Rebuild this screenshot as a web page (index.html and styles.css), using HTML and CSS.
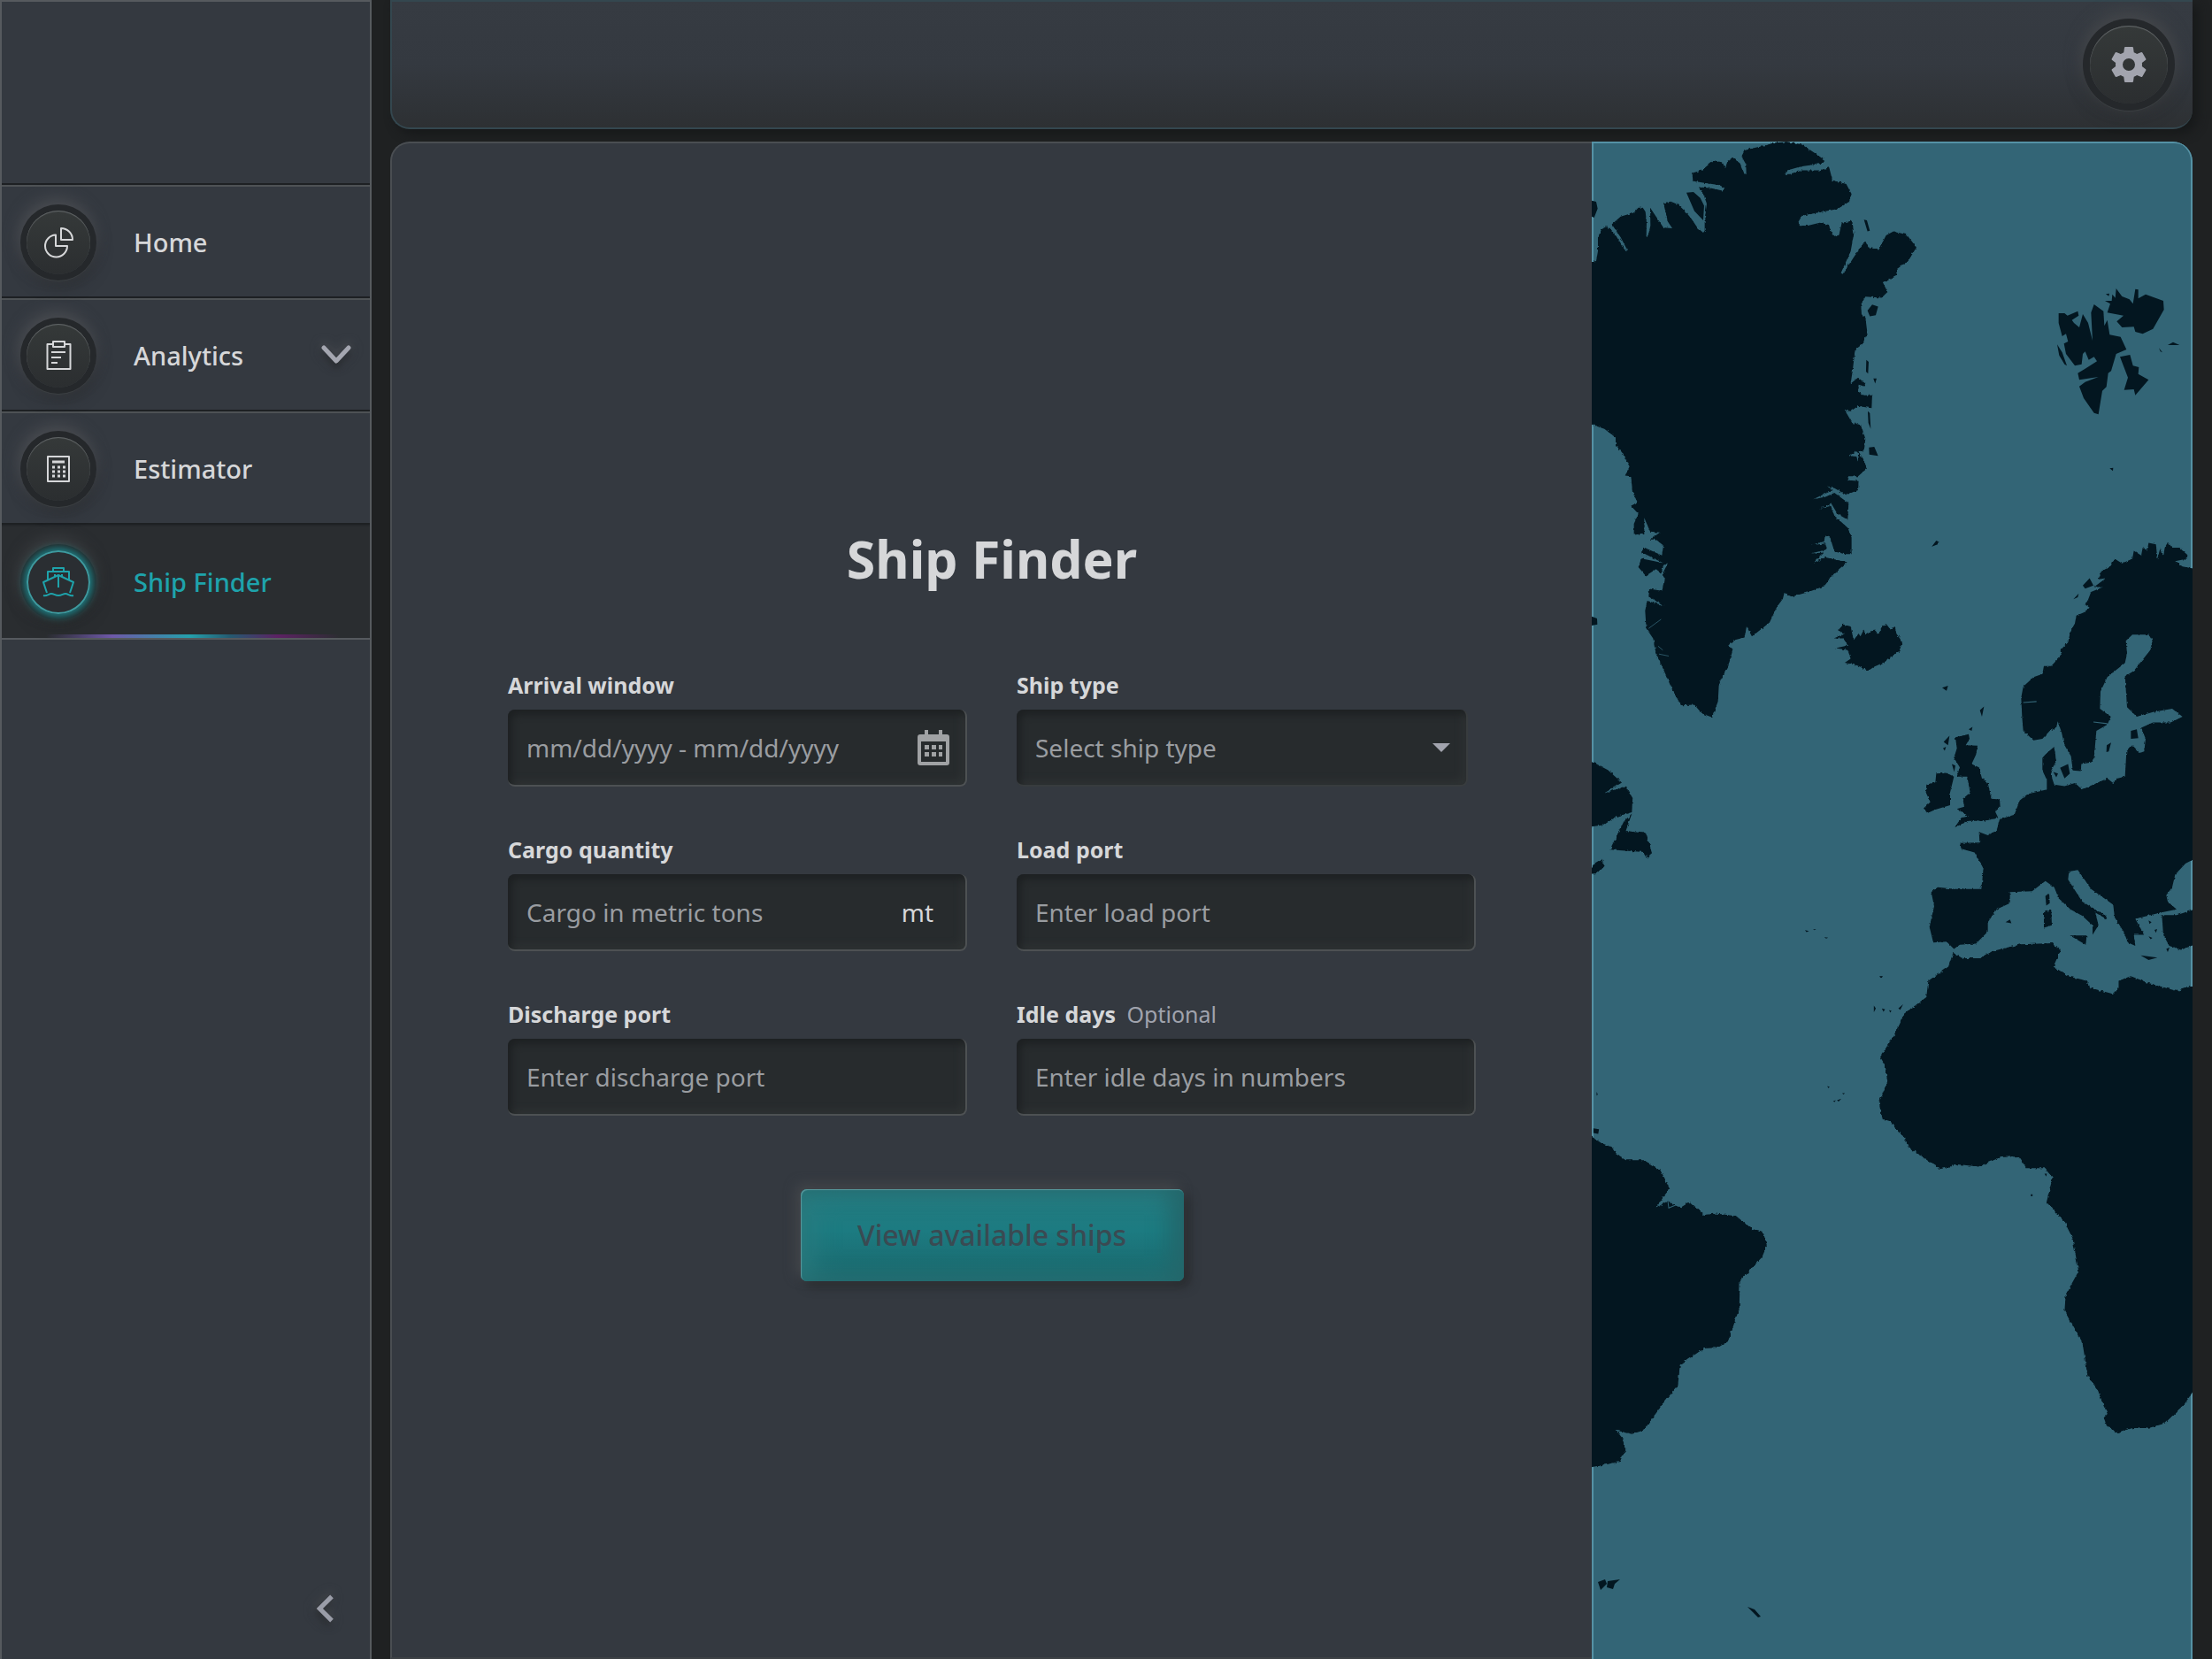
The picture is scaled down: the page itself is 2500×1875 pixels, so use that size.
FILE: index.html
```html
<!DOCTYPE html>
<html lang="en">
<head>
<meta charset="utf-8">
<meta name="viewport" content="width=device-width, initial-scale=1">
<title>Ship Finder</title>
<link rel="stylesheet" href="styles.css">
</head>
<body>
<div class="app">
  <aside class="sidebar">
    <nav class="nav" aria-label="Main">
      <a class="nav-item" href="#home">
        <span class="knob"><svg class="icon" viewBox="0 0 36 36" fill="none" stroke="currentColor" stroke-width="2" stroke-linejoin="round"><path d="M15 9.500A12.500 12.500 0 1 0 28 22H15z"/><path d="M21 2v13h13A13 13 0 0 0 21 2z"/></svg></span>
        <span>Home</span>
      </a>
      <a class="nav-item" href="#analytics">
        <span class="knob"><svg class="icon" viewBox="0 0 36 36" fill="none" stroke="currentColor" stroke-width="2" stroke-linejoin="round"><path d="M12 5H5.500v28h26V5H25"/><path d="M12 2h13v6H12z"/><path d="M10 14h16M10 20h11M10 26h7"/></svg></span>
        <span>Analytics</span>
        <svg class="expand" viewBox="0 0 40 26" fill="none" stroke="currentColor" stroke-width="5" stroke-linecap="round" stroke-linejoin="round"><path d="M6 4l14 15L34 4"/></svg>
      </a>
      <a class="nav-item" href="#estimator">
        <span class="knob"><svg class="icon" viewBox="0 0 36 36" fill="none" stroke="currentColor" stroke-width="2" stroke-linejoin="round"><path d="M6 4h24v28H6z"/><path d="M11 10h14" stroke-width="3"/><path d="M11 16h15M11 21h15M11 26h15" stroke-width="3" stroke-dasharray="3 3"/></svg></span>
        <span>Estimator</span>
      </a>
      <a class="nav-item nav-item-active" href="#ship-finder" aria-current="page">
        <span class="knob knob-active"><svg class="icon" viewBox="0 0 36 36" fill="none" stroke="currentColor" stroke-width="2" stroke-linejoin="round"><path d="M12 6V2h12v4M6 15V6h24v9"/><path d="M5 30L1 18l17-8 17 8-4 12"/><path d="M18 10v14M14 9v3M22 9v3"/><path d="M1 33c4 1 6-2 9-2s4 2 8 2 5-2 8-2 5 3 9 2"/></svg></span>
        <span>Ship Finder</span>
      </a>
    </nav>
    <button class="collapse" type="button" aria-label="Collapse menu"><svg viewBox="0 0 24 24" fill="currentColor"><path d="M15.410 7.410L14 6l-6 6 6 6 1.410-1.410L10.830 12z"/></svg></button>
  </aside>

  <div class="main">
    <header class="topbar">
      <button class="settings" type="button" aria-label="Settings"><svg viewBox="0 0 24 24" fill="currentColor"><path d="M19.430 12.980c.04-.32.07-.64.07-.98s-.03-.66-.07-.98l2.110-1.650c.19-.15.24-.42.12-.64l-2-3.460c-.12-.22-.39-.3-.61-.22l-2.490 1c-.52-.4-1.080-.73-1.690-.98l-.38-2.650C14.460 2.180 14.250 2 14 2h-4c-.25 0-.46.18-.49.42l-.38 2.650c-.61.25-1.170.59-1.690.98l-2.490-1c-.23-.09-.49 0-.61.22l-2 3.460c-.13.22-.07.49.12.64l2.110 1.650c-.04.32-.07.65-.07.98s.03.66.07.98l-2.110 1.650c-.19.15-.24.42-.12.64l2 3.460c.12.22.39.3.61.22l2.490-1c.52.4 1.080.73 1.690.98l.38 2.650c.03.24.24.42.49.42h4c.25 0 .46-.18.49-.42l.38-2.650c.61-.25 1.170-.59 1.690-.98l2.490 1c.23.09.49 0 .61-.22l2-3.460c.12-.22.07-.49-.12-.64zM12 15.500a3.500 3.500 0 1 1 0-7 3.500 3.500 0 0 1 0 7z"/></svg></button>
    </header>

    <main class="panel">
      <form class="finder">
        <h1 class="title">Ship Finder</h1>
        <div class="fields">
          <div class="field">
            <label class="label" for="arrival">Arrival window</label>
            <div class="box">
              <input class="control" id="arrival" type="text" placeholder="mm/dd/yyyy - mm/dd/yyyy">
              <button class="calendar" type="button" aria-label="Choose dates"><svg viewBox="0 0 36 40" fill="currentColor"><path fill-rule="evenodd" d="M3 5h5V0h4v5h12V0h4v5h5a3 3 0 0 1 3 3v29a3 3 0 0 1-3 3H3a3 3 0 0 1-3-3V8a3 3 0 0 1 3-3zm1 8v23h28V13z"/><path d="M8 17h5v5H8zM16 17h5v5h-5zM24 17h4v5h-4zM8 25h5v5H8zM16 25h5v5h-5zM24 25h4v5h-4z"/></svg></button>
            </div>
          </div>
          <div class="field">
            <label class="label" for="type">Ship type</label>
            <div class="box box-select">
              <select class="control" id="type"><option>Select ship type</option></select>
              <svg class="caret" viewBox="0 0 20 10" fill="currentColor"><path d="M0 0h20L10 10z"/></svg>
            </div>
          </div>
          <div class="field">
            <label class="label" for="cargo">Cargo quantity</label>
            <div class="box">
              <input class="control" id="cargo" type="text" placeholder="Cargo in metric tons">
              <span class="unit">mt</span>
            </div>
          </div>
          <div class="field">
            <label class="label" for="load">Load port</label>
            <div class="box"><input class="control" id="load" type="text" placeholder="Enter load port"></div>
          </div>
          <div class="field">
            <label class="label" for="discharge">Discharge port</label>
            <div class="box"><input class="control" id="discharge" type="text" placeholder="Enter discharge port"></div>
          </div>
          <div class="field">
            <label class="label" for="idle">Idle days <span class="optional">Optional</span></label>
            <div class="box"><input class="control" id="idle" type="text" placeholder="Enter idle days in numbers"></div>
          </div>
        </div>
        <button class="submit" type="submit">View available ships</button>
      </form>

      <div class="map">
        <svg class="map-art" viewBox="1799 160 679 1715" preserveAspectRatio="xMinYMin slice" role="img" aria-label="Map of the Atlantic Ocean">
          <defs><filter id="coast" x="0" y="0" width="1" height="1" color-interpolation-filters="sRGB"><feTurbulence type="fractalNoise" baseFrequency="0.12" numOctaves="2" seed="4"/><feDisplacementMap in="SourceGraphic" scale="8" xChannelSelector="R" yChannelSelector="G"/></filter></defs>
          <!-- Greenland, Iceland, Jan Mayen -->
          <g fill="#031620" transform="translate(1790 150) scale(.3333 .4464)">
            <path d="M20 328L42 325 48 300 48 265 60 245 75 238 92 245 110 262 130 285 143 298 147 296 125 265 95 232 125 212 170 202 185 190 200 190 209 200 213 225 212 265 218 262 226 235 225 190 245 212 270 240 300 242 285 225 270 178 295 174 320 182 345 200 365 218 385 240 405 253 410 248 410 220 417 180 408 160 390 138 430 140 470 147 478 140 460 133 400 126 370 122 368 102 400 95 440 70 470 75 480 90 490 70 505 63 530 78 545 105 551 103 550 80 535 60 545 45 570 40 600 35 650 25 690 23 740 30 780 50 818 70 810 78 740 85 690 95 680 105 700 105 740 95 800 95 832 88 843 120 890 130 908 155 900 175 860 193 810 200 740 210 728 225 732 236 760 235 800 228 830 233 845 262 865 260 875 228 910 223 916 255 905 300 872 355 878 358 920 310 955 275 965 290 1000 297 1025 260 1050 250 1095 258 1128 290 1100 325 1062 345 1062 362 1015 380 1030 403 1010 418 955 415 940 435 942 460 955 468 962 510 945 535 920 550 912 600 905 635 930 620 955 635 950 642 932 638 930 655 950 665 978 665 976 697 930 692 905 705 885 703 895 715 910 735 940 740 955 775 950 805 920 808 900 818 925 820 930 835 930 805 950 830 960 850 930 870 895 870 900 880 932 882 930 905 890 917 850 900 825 895 845 905 800 920 778 928 820 922 850 912 898 938 895 980 860 965 840 940 800 952 838 945 850 970 895 1000 908 1025 908 1067 885 1067 850 1060 835 1025 790 1012 818 1020 815 1035 765 1045 820 1040 825 1055 770 1065 815 1063 780 1088 820 1075 893 1087 850 1115 815 1148 760 1163 705 1175 680 1165 675 1180 655 1200 630 1240 600 1258 570 1275 552 1250 545 1278 510 1285 490 1298 505 1310 490 1350 465 1385 458 1400 455 1440 435 1480 400 1470 375 1448 330 1450 300 1410 265 1350 245 1320 235 1280 212 1255 208 1210 215 1185 275 1198 220 1175 222 1155 265 1160 275 1130 268 1115 285 1090 270 1095 262 1115 245 1105 210 1122 185 1100 195 1078 240 1085 270 1090 195 1062 205 1050 265 1070 270 1045 245 1030 225 1030 258 1012 225 1010 205 975 205 1015 170 1018 170 990 185 965 160 945 182 935 165 910 160 870 140 868 155 845 130 810 108 790 108 772 70 750 20 737z" filter="url(#coast)"/>
            <path d="M848 1280L885 1268 862 1260 880 1245 905 1250 915 1285 932 1268 938 1275 950 1258 955 1272 985 1258 1000 1270 1012 1250 1025 1243 1040 1258 1055 1250 1060 1268 1080 1290 1070 1312 1020 1340 985 1352 965 1362 925 1348 885 1342 905 1332 895 1310 855 1305 895 1298 880 1280z" filter="url(#coast)"/>
            <path d="M348 152L372 150 395 165 408 185 405 222 375 198zM950 220L960 222 970 248 962 250zM962 450L978 435 998 440 990 462 970 465zM958 575L966 580 964 610 957 605zM982 622L993 622 988 635zM963 705L970 710 973 750 965 735zM967 797L985 795 998 818 968 815zM1180 1048L1200 1034V1042zM27 172L42 175 47 192 35 215 27 212zM27 1225L45 1230 46 1245 27 1248z"/>
            <path d="M220 1255L262 1232M255 1320L288 1325M252 1300L268 1310" fill="none" stroke="#336576" stroke-width="2"/>
          </g>
          <!-- Svalbard -->
          <g fill="#031620" transform="translate(2200 300) scale(.33333)">
            <path d="M380 162L400 162 410 170 445 155 448 170 425 185 432 195 450 210 462 165 480 195 495 255 490 160 500 132 532 155 535 205 545 185 553 235 590 242 610 285 575 300 558 358 548 365 542 412 528 425 515 505 500 500 465 450 450 410 470 395 515 378 450 388 445 365 470 350 510 325 500 310 482 320 470 292 462 300 458 335 435 340 405 300 398 265 412 258 405 232 392 240 380 195zM537 120L560 120 562 98 572 110 575 78 595 105 620 115 632 130 640 80 650 82 650 112 675 98 735 120 737 150 700 215 665 232 640 225 635 208 595 210 577 190 600 170 545 160 555 130zM588 310L622 303 632 340 652 345 650 368 685 388 640 440 635 420 602 422 615 380zM375 268L392 295 408 340 400 335 382 305zM750 270L768 260 790 270 768 270zM720 280L732 295 725 292zM553 688L565 686 564 697zM540 97L552 95 550 104z"/>
          </g>
          <!-- Europe -->
          <g fill="#031620" transform="translate(2100 560) scale(.33333 .35714)">
            <path d="M1140 232L1100 225 1075 208 1115 200 1117 188 1090 165 1065 165 1050 148 1040 165 1035 190 1025 165 1015 200 1010 155 985 150 980 175 965 165 960 190 935 175 930 200 895 215 870 200 855 225 825 240 815 265 840 262 800 290 830 290 790 305 780 330 770 345 785 355 765 370 740 380 735 405 720 430 712 465 685 490 690 505 655 540 630 540 625 565 595 575 560 605 553 640 556 700 560 745 595 775 625 770 650 745 672 735 677 715 690 750 700 790 722 825 728 870 755 872 757 850 790 845 800 830 808 745 845 725 857 700 820 675 822 620 845 575 905 530 912 500 908 460 930 440 985 440 998 460 990 490 935 555 905 572 912 670 945 700 1000 685 1065 675 1100 700 1060 718 1000 718 960 735 975 770 970 810 955 815 930 790 910 810 905 890 880 895 865 910 845 895 760 930 735 910 700 920 665 915 658 895 655 870 672 840 665 795 640 815 625 830 625 870 640 900 640 930 575 945 548 965 530 1010 480 1025 470 1060 440 1075 410 1065 412 1098 345 1100 350 1118 395 1130 425 1180 418 1245 330 1245 270 1240 248 1255 258 1300 242 1365 255 1415 300 1412 325 1435 345 1422 400 1418 440 1380 440 1350 470 1310 515 1290 515 1255 590 1252 635 1220 665 1240 680 1275 720 1310 760 1330 795 1360 795 1390 815 1360 805 1320 845 1342 840 1330 760 1285 712 1215 715 1190 745 1185 790 1245 865 1295 870 1335 900 1380 915 1415 940 1425 935 1390 970 1390 940 1340 1025 1320 1080 1310 1050 1285 1045 1265 1065 1240 1075 1200 1110 1165 1140 1150z" filter="url(#coast)"/>
            <path d="M1140 1310L1080 1328 1030 1328 1035 1390 1055 1425 1095 1438 1140 1422zM330 765L375 755 378 770 365 790 405 792 400 820 385 850 410 860 420 895 440 910 452 960 480 962 482 985 465 1000 475 1020 430 1030 375 1030 328 1050 350 1020 375 1015 335 992 360 985 355 960 380 940 370 890 335 890 345 860 325 830 335 800zM232 915L262 908 265 880 300 878 325 890 312 940 312 980 260 995 235 1005 222 990 245 970 230 940zM630 1318L655 1312 657 1360 630 1368zM635 1268L648 1258 650 1290 638 1298zM718 1392L775 1392 772 1422z" filter="url(#coast)"/>
            <path d="M958 1455L1015 1462 985 1470zM500 1350L515 1342 520 1354zM685 862L712 850 718 880 700 895zM662 875L678 880 672 892zM843 790L858 782 850 810 842 812zM925 745L945 740 950 768 925 770zM290 780L310 760 305 790zM285 608L305 602 300 618zM413 680L427 668 420 700zM250 162L265 143 275 148zM730 328L748 310 745 322zM762 285L785 262 798 285 770 295zM375 740L388 732 385 745zM72 1521L84 1521 80 1527zM955 1375L968 1380 962 1385zM985 1345L995 1350 988 1356zM1005 1375L1014 1372 1010 1384zM985 1395L998 1400 992 1404zM1045 1435L1056 1430 1050 1445zM318 850L330 855 326 875zM288 800L298 795 294 808z"/>
            <path d="M798 717L845 722M560 655L605 652" fill="none" stroke="#336576" stroke-width="3"/>
          </g>
          <!-- Africa and the Americas -->
          <g fill="#031620" transform="translate(1790 820) scale(.4528 .5293)">
            <path d="M922 485L945 497 990 497 1020 482 1090 467 1170 465 1190 480 1172 515 1210 535 1255 545 1265 560 1320 573 1335 560 1335 545 1365 535 1410 550 1480 567 1530 553V1410L1500 1448 1450 1490 1410 1500 1370 1500 1330 1510 1305 1495 1298 1478 1307 1470 1280 1415 1258 1390 1245 1320 1200 1250 1203 1215 1235 1165 1220 1095 1200 1060 1155 1018 1170 965 1150 945 1105 945 1085 920 1040 922 985 942 935 937 890 947 860 930 810 900 800 880 765 845 745 840 737 805 758 760 752 725 740 708 775 660 800 615 855 580 860 545 910 515zM10 872L45 892 70 900 80 915 105 928 150 928 190 948 215 988 200 1005 180 1030 210 1015 240 1030 265 1017 300 1045 330 1042 380 1047 420 1075 447 1080 457 1110 445 1135 390 1185 388 1245 378 1270 360 1315 335 1328 300 1330 240 1365 235 1410 200 1445 150 1505 120 1513 80 1505 95 1520 105 1545 90 1572 10 1585zM10 72L60 95 95 122 50 145 105 130 122 155 120 185 80 195 50 212 10 217zM120 188L105 225 155 230 170 270 160 285 150 270 65 265 100 205zM10 318L25 295 45 285 52 300 35 315z" filter="url(#coast)"/>
            <path d="M724 598L729 604 724 612zM744 604L752 606 748 611zM762 608L768 609 765 613zM785 604L797 595 790 607zM738 536L745 536 742 539zM552 437L562 439 556 441zM572 435L580 435 576 437zM600 452L610 453 605 455zM608 770L614 772 610 774zM622 802L629 800 626 804zM632 800L643 797 636 803zM645 785L652 785 648 788zM1116 1001L1120 1001 1120 1005 1116 1005zM1150 957L1156 957 1154 963zM24 860L38 862 36 872 24 870zM32 782L35 788 32 790z"/>
            <path d="M208 1003L212 1030 240 1020" fill="none" stroke="#336576" stroke-width="2"/>
          </g>
          <!-- Falkland Islands and South Georgia -->
          <path fill="#031620" d="M1806 1788l8-3 2 5-7 7zM1817 1787l14-2-6 5-2 6-7-2zM1975 1816l8 3 7 8-3 1-6-6z"/>
        </svg>
      </div>
    </main>
  </div>
</div>
</body>
</html>
```
FILE: styles.css
```css
:root {
  --surface: #343940;
  --edge: #565a5e;
  --text: #d6d7d9;
  --muted: #9a9da1;
  --teal: #1ea3ab;
}

* { box-sizing: border-box; }

body {
  margin: 0;
  background: #1f2122;
  color: var(--text);
  font: 28px/40px "Noto Sans", "Open Sans", sans-serif;
}

button { padding: 0; border: 0; color: inherit; font: inherit; background: none; }

svg { display: block; }

.app {
  display: grid;
  grid-template-columns: 420px minmax(0, 1fr);
  gap: 21px;
  height: 100vh;
  min-height: 1400px;
  padding-right: 22px;
}

.sidebar {
  display: flex;
  flex-direction: column;
  justify-content: space-between;
  padding-top: 207px;
  background: var(--surface);
  border: 2px solid var(--edge);
  border-bottom: 0;
}

.nav { border-bottom: 2px solid var(--edge); }

.nav-item {
  display: flex;
  align-items: center;
  gap: 49px;
  height: 128px;
  padding: 0 18px 0 28px;
  color: var(--text);
  font-size: 29px;
  font-weight: 500;
  text-decoration: none;
  border-top: 2px solid #4e5255;
  box-shadow: 0 -2px 0 #1d2023;
}

.nav-item-active {
  color: var(--teal);
  background:
    linear-gradient(90deg, transparent 12%, #6e58a8 30%, #24a0ac 51%, #245a70 62%, #5c2163 75%, transparent 92%) bottom / 100% 4px no-repeat,
    #2a2d30;
  border-top-color: #25282b;
}

.knob {
  display: grid;
  flex: none;
  place-items: center;
  width: 72px;
  height: 72px;
  border-radius: 50%;
  background: linear-gradient(#353939, #2b2e30);
  box-shadow:
    inset 0 1px 1px #65696b,
    0 0 0 7px #25282b,
    0 1px 0 7px #3b3f42,
    -2px -6px 16px 8px #484b50,
    2px 8px 16px 6px #2b2e32;
}

.knob-active {
  background: #2a2e32;
  box-shadow:
    inset 0 0 0 2px #3d9a9f,
    0 0 8px 3px #1c8086,
    0 0 0 7px #24282a,
    -2px -6px 16px 8px #3c3f42,
    2px 8px 16px 6px #25282a;
}

.icon { width: 36px; height: 36px; }

.expand {
  width: 40px;
  height: 26px;
  margin-left: auto;
  color: #a4a6b0;
  filter: drop-shadow(0 5px 4px #202327) drop-shadow(0 -4px 5px #474a4f);
}

.collapse {
  align-self: flex-end;
  margin: 0 19px 26px 0;
  color: #9a9da8;
  filter: drop-shadow(-2px 5px 4px #24272b) drop-shadow(0 -4px 5px #44474b);
}

.collapse svg { width: 62px; height: 62px; }

.main { display: flex; flex-direction: column; gap: 14px; min-width: 0; }

.topbar {
  display: flex;
  align-items: center;
  justify-content: flex-end;
  height: 146px;
  padding-right: 28px;
  background: linear-gradient(#363b42, #343940 50%, #2d3033);
  border: 2px solid #34474f;
  border-right: 0;
  border-radius: 0 0 22px 22px;
  box-shadow: 6px 6px 12px #17191a;
}

.settings {
  display: grid;
  place-items: center;
  width: 88px;
  height: 88px;
  color: #a2a4ae;
  border-radius: 50%;
  background: linear-gradient(#353939, #2b2e30);
  box-shadow:
    inset 0 1px 1px #65696b,
    0 0 0 8px #25282b,
    0 1px 0 8px #3b3f42,
    0 -6px 18px 10px #44474b,
    0 8px 18px 6px #2a2d30;
}

.settings svg { width: 48px; height: 48px; }

.panel {
  display: grid;
  flex: 1;
  grid-template-rows: minmax(0, 1fr);
  grid-template-columns: 2fr 1fr;
  min-height: 0;
  overflow: hidden;
  background: var(--surface);
  border-radius: 22px 22px 0 0;
}

.finder {
  display: flex;
  flex-direction: column;
  align-items: center;
  justify-content: center;
  gap: 83px;
  border: 2px solid #4a4e52;
  border-right: 0;
  border-bottom-color: #3d4145;
  border-radius: 22px 0 0 0;
}

.title { margin: 0; font-size: 59px; font-weight: 700; line-height: 88px; }

.fields {
  display: grid;
  grid-template-columns: repeat(2, minmax(0, 1fr));
  gap: 55px 56px;
  width: 1094px;
  max-width: 90%;
}

.field { display: flex; flex-direction: column; gap: 12px; }

.label { font-size: 25px; font-weight: 700; line-height: 32px; }

.optional { margin-left: 6px; color: #a0a3ad; font-weight: 400; }

.box {
  display: flex;
  align-items: center;
  height: 87px;
  padding: 0 18px 0 21px;
  background: #272b2d;
  border-right: 2px solid #4d5153;
  border-bottom: 2px solid #4d5153;
  border-radius: 8px;
  box-shadow: inset 4px 5px 8px #1d2022, inset -4px -4px 8px #303435;
}

.box-select {
  position: relative;
  margin-right: 9px;
  border-color: #383c3e;
}

.control {
  flex: 1;
  min-width: 0;
  height: 100%;
  padding: 0;
  color: var(--muted);
  font: inherit;
  background: none;
  border: 0;
  outline: 0;
  appearance: none;
}

.control::placeholder { color: var(--muted); opacity: 1; }

.calendar { color: #a0a2a4; }

.calendar svg { width: 36px; height: 40px; }

.unit { margin-right: 18px; }

.caret {
  position: absolute;
  right: 18px;
  width: 20px;
  height: 10px;
  color: #a2a4ae;
  pointer-events: none;
}

.submit {
  width: 433px;
  height: 104px;
  color: #3a4a52;
  font-size: 32px;
  font-weight: 500;
  background: linear-gradient(#267b80, #1c7b81 45%, #1b676c);
  border-radius: 7px;
  box-shadow:
    inset 1px 1px 1px #5b9a9e,
    inset -16px 0 24px #23676b,
    inset 12px 0 30px #2a7b7f,
    -5px -5px 14px #44474b,
    6px 6px 12px #282b2e;
}

.map {
  overflow: hidden;
  background: #336576;
  border-radius: 0 22px 0 0;
  box-shadow: inset 2px 2px 0 #5592a5, inset -2px 0 0 #5592a5;
}

.map-art { width: 100%; height: 100%; }
```
